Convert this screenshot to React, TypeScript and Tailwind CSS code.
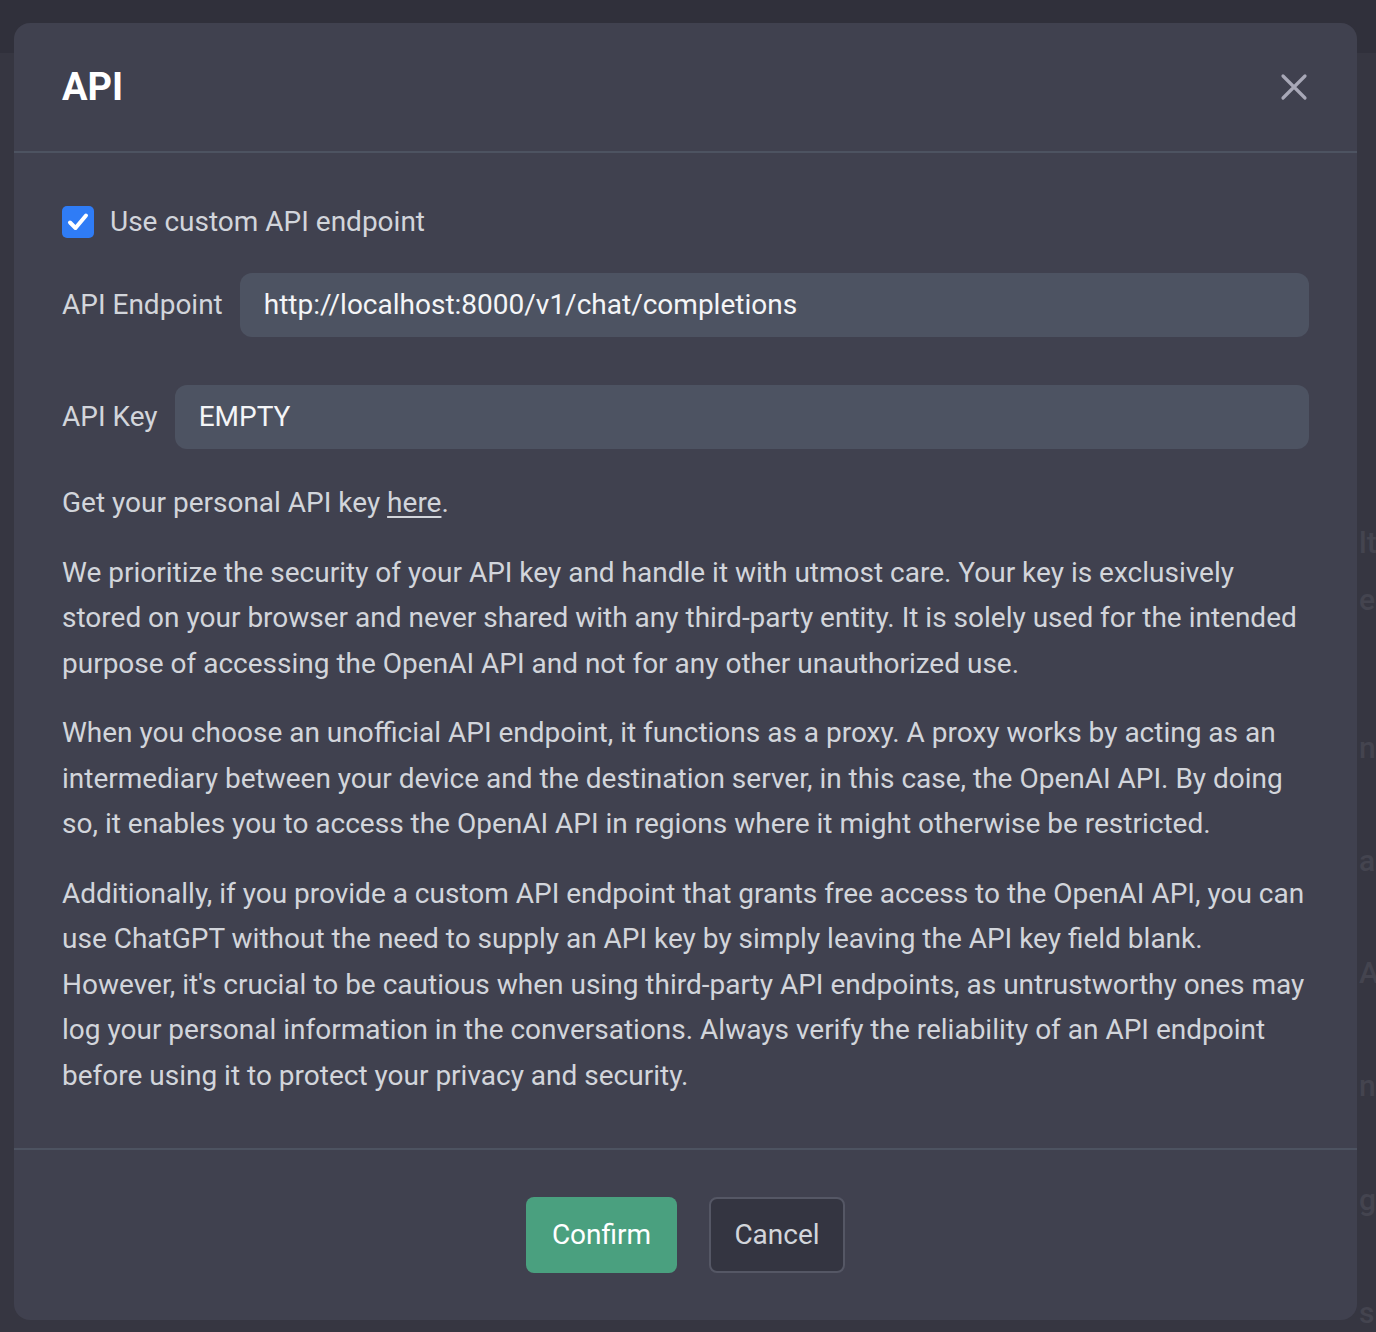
import React from 'react';

const font = { fontFamily: 'Roboto, "Noto Sans", Arial, sans-serif' };

// bits of the page under the overlay that peek out on the right
const backdropBits = [
  { text: 'lt', mt: 'mt-[470px]' },
  { text: 'e', mt: 'mt-[17px]' },
  { text: 'ni', mt: 'mt-[108px]' },
  { text: 'ar', mt: 'mt-[73px]' },
  { text: 'A', mt: 'mt-[72px]' },
  { text: 'n', mt: 'mt-[73px]' },
  { text: 'g', mt: 'mt-[74px]' },
  { text: 's', mt: 'mt-[73px]' },
];

function CloseIcon() {
  return (
    <svg width="28" height="28" viewBox="0 0 28 28" fill="none">
      <path d="M3 3L25 25M25 3L3 25" stroke="#a8a8b7" strokeWidth="3.2" strokeLinecap="round" />
    </svg>
  );
}

function Checkbox() {
  return (
    <span className="flex h-[32px] w-[32px] items-center justify-center rounded-[5px] bg-[#2f7cf6]">
      <svg width="24" height="24" viewBox="0 0 24 24" fill="none">
        <path d="M4 12.5L9.5 18L20 5.5" stroke="white" strokeWidth="4" strokeLinecap="round" strokeLinejoin="round" />
      </svg>
    </span>
  );
}

function Field({ label, value }: { label: string; value: string }) {
  return (
    <div className="flex items-center gap-[17px]">
      <span className="whitespace-nowrap text-[28px] text-[#d2d5db]">{label}</span>
      <div className="flex h-[64px] flex-1 items-center rounded-[12px] bg-[#4d5362] px-[24px] text-[28px] text-[#f4f5f7]">
        {value}
      </div>
    </div>
  );
}

export default function App() {
  return (
    <div className="relative h-[1332px] w-full overflow-hidden bg-[#363641]" style={font}>
      <div className="h-[53px] bg-[#30303b]" />
      <div className="flex flex-col items-start pl-[1359px] text-[30px] leading-[40px] font-medium text-[#44444f]">
        {backdropBits.map((b, i) => (
          <div key={i} className={`${b.mt} whitespace-nowrap`}>
            {b.text}
          </div>
        ))}
      </div>

      {/* modal */}
      <div className="absolute left-[14px] top-[23px] w-[1343px] rounded-[16px] bg-[#40414f]">
        <div className="flex h-[130px] items-center justify-between border-b-2 border-[#4d5361] pl-[48px] pr-[49px]">
          <h2 className="text-[38px] font-bold text-white">API</h2>
          <button className="flex items-center justify-center">
            <CloseIcon />
          </button>
        </div>

        <div className="px-[48px] pt-[48px] pb-[50px]">
          <label className="flex items-center gap-[16px]">
            <Checkbox />
            <span className="text-[28px] text-[#d2d5db]">Use custom API endpoint</span>
          </label>

          <div className="mt-[30px] flex flex-col gap-[48px]">
            <Field label="API Endpoint" value="http://localhost:8000/v1/chat/completions" />
            <Field label="API Key" value="EMPTY" />
          </div>

          <div className="mt-[31px] flex flex-col gap-[24px] text-[28px] leading-[45.5px] text-[#d2d5db]">
            <p>
              Get your personal API key <a className="underline underline-offset-[4px]">here</a>.
            </p>
            <p>
              We prioritize the security of your API key and handle it with utmost care. Your key is exclusively
              stored on your browser and never shared with any third-party entity. It is solely used for the intended
              purpose of accessing the OpenAI API and not for any other unauthorized use.
            </p>
            <p>
              When you choose an unofficial API endpoint, it functions as a proxy. A proxy works by acting as an
              intermediary between your device and the destination server, in this case, the OpenAI API. By doing
              so, it enables you to access the OpenAI API in regions where it might otherwise be restricted.
            </p>
            <p>
              Additionally, if you provide a custom API endpoint that grants free access to the OpenAI API, you can
              use ChatGPT without the need to supply an API key by simply leaving the API key field blank.
              However, it's crucial to be cautious when using third-party API endpoints, as untrustworthy ones may
              log your personal information in the conversations. Always verify the reliability of an API endpoint
              before using it to protect your privacy and security.
            </p>
          </div>
        </div>

        <div className="flex items-center justify-center gap-[32px] border-t-2 border-[#4d5361] pt-[47px] pb-[47px]">
          <button className="h-[76px] w-[151px] rounded-[8px] bg-[#4aa07f] text-[28px] text-white">Confirm</button>
          <button className="h-[76px] w-[136px] rounded-[8px] border-2 border-[#555765] bg-[#343541] text-[28px] text-[#d2d5db]">
            Cancel
          </button>
        </div>
      </div>
    </div>
  );
}
